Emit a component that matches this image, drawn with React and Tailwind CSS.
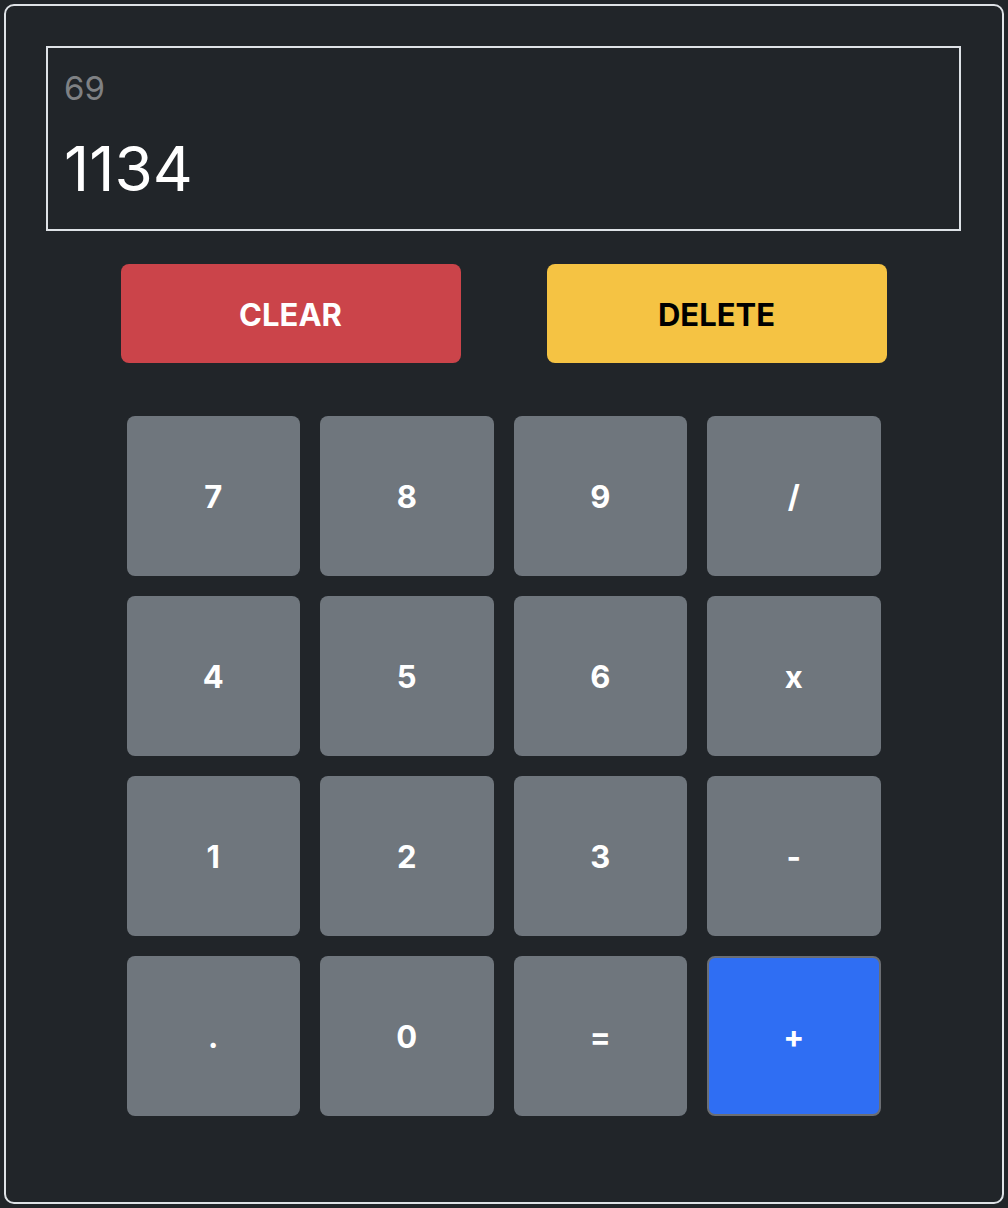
import React from "react";

const keys = ["7", "8", "9", "/", "4", "5", "6", "x", "1", "2", "3", "-", ".", "0", "=", "+"];

export default function App() {
  return (
    <div className="min-h-[1208px] bg-[#212529] pt-1 pl-1" style={{ fontFamily: "Inter, 'Noto Sans', sans-serif" }}>
      <div className="w-[1000px] h-[1200px] border-2 border-[#dee2e6] rounded-[10px] bg-[#212529] pt-[40px] pl-[40px] pr-[41px]">
        <div className="h-[185px] border-2 border-[#dee2e6] pl-4 pt-[21px] flex flex-col gap-[23px]">
          <div className="text-[33px] leading-[1.2] text-[#7f8184]">69</div>
          <div className="text-[62px] leading-[1.2] text-white">1134</div>
        </div>
        <div className="flex justify-center gap-[86px] mt-[33px]">
          <button className="w-[340px] h-[99px] rounded-[8px] bg-[#cb444a] text-white text-[31px] font-bold pt-[4px]">CLEAR</button>
          <button className="w-[340px] h-[99px] rounded-[8px] bg-[#f5c343] text-black text-[31px] font-bold pt-[4px]">DELETE</button>
        </div>
        <div className="w-[754px] mx-auto mt-[53px] grid grid-cols-4 gap-5">
          {keys.map((k) =>
            k === "+" ? (
              <button key={k} className="h-[160px] rounded-[8px] bg-[#2f6ef3] border-2 border-[#6b6e73] text-white text-[31px] font-bold pt-[2px]">
                {k}
              </button>
            ) : (
              <button key={k} className="h-[160px] rounded-[8px] bg-[#6f767d] text-white text-[31px] font-bold pt-[2px]">
                {k}
              </button>
            )
          )}
        </div>
      </div>
    </div>
  );
}
